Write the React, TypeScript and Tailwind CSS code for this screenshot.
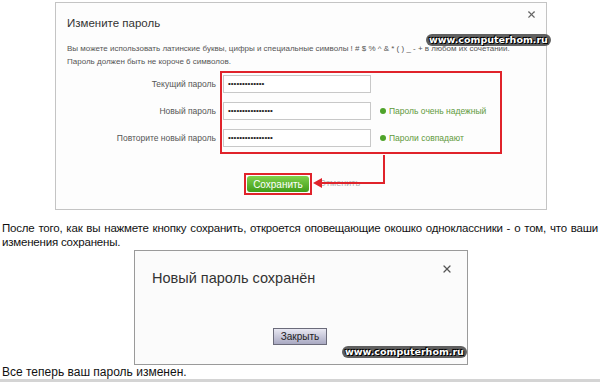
import { X } from "lucide-react";

const font = "font-['Liberation_Sans',Arial,sans-serif]";

function Watermark({ className }: { className: string }) {
    return (
        <div
            className={`absolute ${className} rounded-full bg-[#3a3a3a]/80 px-[3px] font-['DejaVu_Sans',sans-serif] text-[9.5px] font-bold leading-[12px] text-white [text-shadow:0_0_1px_#000,0_0_2px_#000,1px_1px_0_#000,-1px_-1px_0_#000]`}
        >
            www.computerhom.ru
        </div>
    );
}

const fields = [
    { label: "Текущий пароль", dots: 13, status: "" },
    { label: "Новый пароль", dots: 16, status: "Пароль очень надежный" },
    { label: "Повторите новый пароль", dots: 16, status: "Пароли совпадают" },
];

function ChangePasswordPanel() {
    return (
        <div className="relative ml-[55px] mt-[2px] h-[208px] w-[492px] border border-[#c4c4c4] bg-[#fdfdfd] pl-[11px] pt-[13px]">
            <X className="absolute right-[9px] top-[6px] text-[#666]" size={11} strokeWidth={2.5} />
            <Watermark className="left-[370px] top-[31px]" />

            <h2 className="text-[11.5px] leading-[14px] text-[#333]">Измените пароль</h2>
            <p className="mt-[12px] w-[445px] text-[8px] leading-[13px] text-[#555]">
                Вы можете использовать латинские буквы, цифры и специальные символы ! # $ % ^ &amp; * ( ) _ - + в любом их сочетании.
                <br />
                Пароль должен быть не короче 6 символов.
            </p>

            <div className="mt-[3px] flex">
                <div className="flex w-[149px] flex-col items-end gap-[9px] pt-[4px]">
                    {fields.map((f) => (
                        <div key={f.label} className="h-[18px] text-[8.5px] leading-[18px] text-[#555]">
                            {f.label}
                        </div>
                    ))}
                </div>
                <div className="ml-[4px] flex h-[83px] w-[282px] flex-col gap-[9px] border-2 border-[#e0232b] pl-[1px] pt-[2px]">
                    {fields.map((f) => (
                        <div key={f.label} className="flex h-[18px] items-center">
                            <div className="flex h-[18px] w-[148px] items-center border border-[#c8c8c8] bg-white pl-[4px] text-[8px] leading-none text-[#222]">
                                {"•".repeat(f.dots)}
                            </div>
                            {f.status && (
                                <div className="ml-[9px] flex items-center gap-[3px] text-[8.5px] text-[#5f9a3c]">
                                    <span className="h-[6px] w-[6px] rounded-full bg-[#4ea32a]" />
                                    {f.status}
                                </div>
                            )}
                        </div>
                    ))}
                </div>
            </div>

            <div className="ml-[177px] mt-[19px] flex items-center">
                <div className="border-2 border-[#e0232b] p-px">
                    <button className="flex h-[16px] w-[62px] items-center justify-center rounded-[3px] bg-gradient-to-b from-[#7fd14a] to-[#3f9c17] text-[10px] text-white">
                        Сохранить
                    </button>
                </div>
                <span className="ml-[7px] text-[9px] text-[#b0b0b0]">Отменить</span>
            </div>

            <svg className="absolute left-0 top-0" width="490" height="206" viewBox="0 0 490 206">
                <polyline points="328,152 328,180 264,180" fill="none" stroke="#e0232b" strokeWidth="2" />
                <polygon points="257,180 266,175 266,185" fill="#e0232b" />
            </svg>
        </div>
    );
}

function SavedDialog() {
    return (
        <div className="relative ml-[134px] h-[115px] w-[334px] border border-[#9a9a9a] bg-[#fbfbfb] pl-[17px] pt-[18px]">
            <X className="absolute right-[14px] top-[12px] text-[#555]" size={12} strokeWidth={2.5} />
            <Watermark className="left-[207px] top-[95px]" />
            <h2 className="text-[14.5px] leading-[18px] text-[#333]">Новый пароль сохранён</h2>
            <div className="ml-[121px] mt-[41px]">
                <button className="flex h-[17px] w-[54px] items-center justify-center border border-[#6b6b7a] bg-gradient-to-b from-[#e8e8f2] to-[#a9a9c2] text-[10px] text-[#222]">
                    Закрыть
                </button>
            </div>
        </div>
    );
}

export default function App() {
    return (
        <div className={`h-[382px] w-[600px] overflow-hidden bg-white ${font}`}>
            <ChangePasswordPanel />
            <p className="mt-[11px] px-[2px] text-justify text-[11.5px] leading-[14px] tracking-[-0.2px] text-[#111]">
                После того, как вы нажмете кнопку сохранить, откроется оповещающие окошко одноклассники - о том, что ваши изменения сохранены.
            </p>
            <div className="mt-px">
                <SavedDialog />
            </div>
            <p className="px-[2px] text-[12px] leading-[14px] text-[#111]">Все теперь ваш пароль изменен.</p>
            <div className="h-[4px] bg-[#d4d4d4]" />
        </div>
    );
}
